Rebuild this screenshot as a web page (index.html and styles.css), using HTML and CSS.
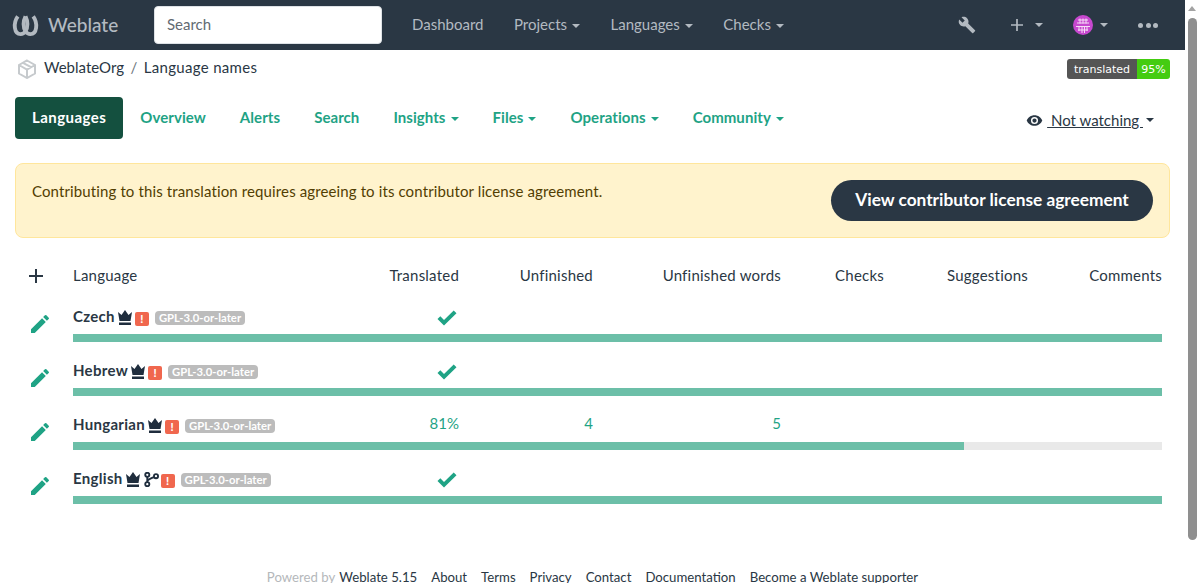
FILE: index.html
```html
<!DOCTYPE html>
<html lang="en">
  <head>
    <meta charset="UTF-8" />
    <title>Language names</title>
    <link rel="stylesheet" href="styles.css">
  </head>
  <body>
    <nav class="navbar">
      <a class="brand">
        <svg class="brand-logo" viewBox="0 0 28 24" width="27" height="24"><path d="M6 3C1 10 2 21.500 9 21.500c4 0 7-4.500 7-10.500 0-3-1-6-2-8"/><path d="M22 3c5 7 4 18.500-3 18.500-4 0-7-4.500-7-10.500 0-3 1-6 2-8"/></svg>
        <span>Weblate</span>
      </a>
      <input class="nav-search" type="text" placeholder="Search">
      <ul class="nav-links">
        <li>Dashboard</li>
        <li class="has-caret">Projects</li>
        <li class="has-caret">Languages</li>
        <li class="has-caret">Checks</li>
      </ul>
      <div class="nav-tools">
        <svg class="tool-wrench" viewBox="0 0 24 24" width="18" height="18"><path d="M22.700 19l-9.100-9.100c.9-2.300.4-5-1.500-6.900-2-2-5-2.400-7.400-1.300L9 6 6 9 1.600 4.700C.4 7.100.9 10.100 2.900 12.100c1.900 1.900 4.600 2.400 6.900 1.500l9.100 9.100c.4.400 1 .4 1.400 0l2.300-2.300c.5-.4.500-1.100.100-1.400z"/></svg>
        <svg class="tool-plus" viewBox="0 0 14 14" width="12" height="12"><path d="M6 0h2v6h6v2H8v6H6V8H0V6h6z"/></svg>
        <span class="caret tool-caret-a"></span>
        <svg class="avatar" viewBox="0 0 20 20" width="20" height="20">
          <circle cx="10" cy="10" r="10" fill="#c748cf"/>
          <path d="M5 5h10M4 8h12M3 11.500h14M5 15h10M7 3.500v5M10 3.500v5M13 3.500v5M6 11v5M9 11v7M11.500 11v7M14 11v5" stroke="#f6dcf7" stroke-width="1" fill="none"/>
        </svg>
        <span class="caret tool-caret-b"></span>
        <div class="dots"><i></i><i></i><i></i></div>
      </div>
    </nav>

    <div class="crumb-row">
      <div class="crumbs">
        <svg class="crumb-icon" viewBox="0 0 20 20" width="20" height="20"><path d="M10 1.500L18 6v8.500L10 19l-8-4.500V6zM2 6l8 4.500L18 6M10 10.500V19M6 3.800l8 4.400"/></svg>
        <a>WeblateOrg</a>
        <span class="crumb-sep">/</span>
        <a class="crumb-project">Language names</a>
      </div>
      <div class="badge"><span class="badge-label">translated</span><span class="badge-value">95%</span></div>
    </div>

    <div class="tabs-row">
      <ul class="tabs">
        <li class="tab is-active">Languages</li>
        <li class="tab">Overview</li>
        <li class="tab">Alerts</li>
        <li class="tab">Search</li>
        <li class="tab has-caret">Insights</li>
        <li class="tab has-caret">Files</li>
        <li class="tab has-caret">Operations</li>
        <li class="tab has-caret">Community</li>
      </ul>
      <div class="watch">
        <svg viewBox="0 0 24 24" width="17" height="17"><path d="M12 4.500C7 4.500 2.700 7.600 1 12c1.700 4.400 6 7.500 11 7.500s9.300-3.100 11-7.500c-1.700-4.400-6-7.500-11-7.500zM12 17a5 5 0 1 1 0-10 5 5 0 0 1 0 10zm0-8a3 3 0 1 0 0 6 3 3 0 0 0 0-6z"/></svg>
        <a>&nbsp;Not watching&nbsp;</a>
        <span class="caret"></span>
      </div>
    </div>

    <div class="alert">
      <p>Contributing to this translation requires agreeing to its contributor license agreement.</p>
      <a class="alert-button">View contributor license agreement</a>
    </div>

    <table class="lang-table">
      <colgroup>
        <col class="col-icon"><col class="col-lang"><col class="col-trans"><col class="col-unf"><col class="col-words"><col class="col-checks"><col class="col-sugg"><col class="col-comm">
      </colgroup>
      <thead>
        <tr>
          <th class="cell-icon"><svg class="add-icon" viewBox="0 0 14 14" width="14" height="14"><path d="M6 0h2v6h6v2H8v6H6V8H0V6h6z"/></svg></th>
          <th class="cell-name">Language</th>
          <th>Translated</th>
          <th>Unfinished</th>
          <th>Unfinished words</th>
          <th>Checks</th>
          <th>Suggestions</th>
          <th>Comments</th>
        </tr>
      </thead>
      <tbody>
        <tr class="row-main">
          <td class="cell-icon" rowspan="2"><svg class="pencil" viewBox="0 0 24 24" width="24" height="24"><path d="M3 17.250V21h3.750L17.810 9.940l-3.750-3.750zM20.710 7.040a1 1 0 0 0 0-1.410l-2.340-2.340a1 1 0 0 0-1.410 0l-1.830 1.830 3.750 3.750z"/></svg></td>
          <td class="cell-name"><span class="lang-name">Czech</span><svg class="crown" viewBox="0 0 16 15" width="16" height="15"><path d="M1 2l3.500 3L8 0l3.500 5L15 2l-1.500 9h-11zM2 12.500h12V15H2z"/></svg><span class="warn">!</span><span class="license">GPL-3.0-or-later</span></td>
          <td><svg class="check" viewBox="0 0 20 16" width="20" height="16"><path d="M7 15.500L.5 9l2.800-2.800L7 9.900 16.700.5l2.800 2.800z"/></svg></td>
          <td></td><td></td><td></td><td></td><td></td>
        </tr>
        <tr class="row-bar"><td colspan="7"><div class="bar"><div class="bar-fill" style="width: 100%"></div></div></td></tr>
        <tr class="row-main">
          <td class="cell-icon" rowspan="2"><svg class="pencil" viewBox="0 0 24 24" width="24" height="24"><path d="M3 17.250V21h3.750L17.810 9.940l-3.750-3.750zM20.710 7.040a1 1 0 0 0 0-1.410l-2.340-2.340a1 1 0 0 0-1.410 0l-1.830 1.830 3.750 3.750z"/></svg></td>
          <td class="cell-name"><span class="lang-name">Hebrew</span><svg class="crown" viewBox="0 0 16 15" width="16" height="15"><path d="M1 2l3.500 3L8 0l3.500 5L15 2l-1.500 9h-11zM2 12.500h12V15H2z"/></svg><span class="warn">!</span><span class="license">GPL-3.0-or-later</span></td>
          <td><svg class="check" viewBox="0 0 20 16" width="20" height="16"><path d="M7 15.500L.5 9l2.800-2.800L7 9.900 16.700.5l2.800 2.800z"/></svg></td>
          <td></td><td></td><td></td><td></td><td></td>
        </tr>
        <tr class="row-bar"><td colspan="7"><div class="bar"><div class="bar-fill" style="width: 100%"></div></div></td></tr>
        <tr class="row-main">
          <td class="cell-icon" rowspan="2"><svg class="pencil" viewBox="0 0 24 24" width="24" height="24"><path d="M3 17.250V21h3.750L17.810 9.940l-3.750-3.750zM20.710 7.040a1 1 0 0 0 0-1.410l-2.340-2.340a1 1 0 0 0-1.410 0l-1.830 1.830 3.750 3.750z"/></svg></td>
          <td class="cell-name"><span class="lang-name">Hungarian</span><svg class="crown" viewBox="0 0 16 15" width="16" height="15"><path d="M1 2l3.500 3L8 0l3.500 5L15 2l-1.500 9h-11zM2 12.500h12V15H2z"/></svg><span class="warn">!</span><span class="license">GPL-3.0-or-later</span></td>
          <td class="num">81%</td>
          <td class="num">4</td>
          <td class="num">5</td>
          <td></td><td></td><td></td>
        </tr>
        <tr class="row-bar"><td colspan="7"><div class="bar"><div class="bar-fill" style="width: 81.800%"></div></div></td></tr>
        <tr class="row-main">
          <td class="cell-icon" rowspan="2"><svg class="pencil" viewBox="0 0 24 24" width="24" height="24"><path d="M3 17.250V21h3.750L17.810 9.940l-3.750-3.750zM20.710 7.040a1 1 0 0 0 0-1.410l-2.340-2.340a1 1 0 0 0-1.410 0l-1.830 1.830 3.750 3.750z"/></svg></td>
          <td class="cell-name"><span class="lang-name">English</span><svg class="crown" viewBox="0 0 16 15" width="16" height="15"><path d="M1 2l3.500 3L8 0l3.500 5L15 2l-1.500 9h-11zM2 12.500h12V15H2z"/></svg><svg class="fork" viewBox="0 0 16 16" width="15" height="15"><circle cx="3.500" cy="3" r="2.200"/><circle cx="3.500" cy="13" r="2.200"/><circle cx="12.800" cy="4.500" r="2.200"/><path d="M3.500 5.200v5.600M3.500 10c0-2 3-2.500 7-4.500"/></svg><span class="warn">!</span><span class="license">GPL-3.0-or-later</span></td>
          <td><svg class="check" viewBox="0 0 20 16" width="20" height="16"><path d="M7 15.500L.5 9l2.800-2.800L7 9.900 16.700.5l2.800 2.800z"/></svg></td>
          <td></td><td></td><td></td><td></td><td></td>
        </tr>
        <tr class="row-bar"><td colspan="7"><div class="bar"><div class="bar-fill" style="width: 100%"></div></div></td></tr>
      </tbody>
    </table>

    <footer class="footer">
      <span class="powered">Powered by</span>
      <a>Weblate 5.15</a>
      <a>About</a>
      <a>Terms</a>
      <a>Privacy</a>
      <a>Contact</a>
      <a>Documentation</a>
      <a>Become a Weblate supporter</a>
    </footer>

    <div class="scrollbar"><span class="scroll-up"></span><span class="scroll-thumb"></span></div>
  </body>
</html>
```

FILE: styles.css
```css
* {
  box-sizing: border-box;
  margin: 0;
  padding: 0;
}
html, body {
  height: 583px;
  overflow: hidden;
}
body {
  width: 1185px;
  background: #fff;
  color: #2a3744;
  font: 15px Lato, sans-serif;
}
ul {
  list-style: none;
}
.caret {
  display: inline-block;
  width: 0;
  height: 0;
  border-top: 4px solid currentColor;
  border-left: 4px solid transparent;
  border-right: 4px solid transparent;
}
.has-caret::after {
  content: "";
  display: inline-block;
  margin-left: 5px;
  vertical-align: 2px;
  border-top: 4px solid currentColor;
  border-left: 4px solid transparent;
  border-right: 4px solid transparent;
}

/* top bar */
.navbar {
  display: flex;
  align-items: center;
  height: 50px;
  background: #2a3744;
  color: #b3bac1;
}
.brand {
  display: flex;
  align-items: center;
  width: 154px;
  padding-left: 12px;
  font-size: 19px;
  font-weight: 500;
}
.brand span {
  padding-bottom: 2px;
}
.brand-logo {
  fill: none;
  stroke: #b3bac1;
  stroke-width: 4;
  margin-right: 9px;
}
.nav-search {
  width: 228px;
  height: 38px;
  padding: 0 12px 2px;
  background: #fff;
  border: 1px solid #dee2e6;
  border-radius: 4px;
  font: 15px Lato, sans-serif;
}
.nav-search::placeholder {
  color: #626a72;
}
.nav-links {
  display: flex;
  gap: 30.500px;
  margin-left: 30px;
  padding-bottom: 2px;
}
.nav-tools {
  display: flex;
  align-items: center;
  margin-left: auto;
  padding-right: 27px;
}
.tool-wrench {
  fill: #b3bac1;
  margin-right: 35px;
}
.tool-plus {
  fill: #b3bac1;
  margin-right: 12px;
}
.tool-caret-a {
  margin-right: 30px;
}
.avatar {
  margin-right: 7px;
}
.tool-caret-b {
  margin-right: 30px;
}
.dots {
  display: flex;
  gap: 2.500px;
}
.dots i {
  width: 5px;
  height: 5px;
  border-radius: 50%;
  background: #b3bac1;
}

/* breadcrumb */
.crumb-row {
  display: flex;
  align-items: flex-start;
  justify-content: space-between;
  height: 47px;
  padding: 9px 15px 0 17px;
}
.crumbs {
  display: flex;
  align-items: center;
  height: 20px;
}
.crumbs a,
.crumb-sep {
  margin-bottom: 5px;
}
.crumb-icon {
  fill: none;
  stroke: #c6cacd;
  stroke-width: 2;
  margin-right: 7px;
}
.crumb-sep {
  margin-left: 6.500px;
  margin-right: 6.500px;
  color: #6c757d;
}
.crumb-project {
  letter-spacing: .3px;
}
.badge {
  display: flex;
  height: 20px;
  font: 11px/21px "DejaVu Sans", sans-serif;
  color: #fff;
  border-radius: 3px;
  overflow: hidden;
}
.badge-label {
  width: 70px;
  text-align: center;
  background: #555;
}
.badge-value {
  width: 33px;
  text-align: center;
  background: #4c1;
}

/* tabs */
.tabs-row {
  display: flex;
  justify-content: space-between;
  align-items: center;
  height: 42px;
  padding: 0 31px 0 15px;
}
.tabs {
  display: flex;
  align-items: center;
  gap: 34px;
}
.tab {
  padding-bottom: 2px;
  color: #1fa385;
  font-weight: 700;
  letter-spacing: .06px;
}
.tab.is-active {
  display: flex;
  align-items: center;
  height: 42px;
  padding: 0 17px 2px;
  margin-right: -17px;
  background: #14503f;
  color: #fff;
  border-radius: 4px;
  letter-spacing: .45px;
}
.watch {
  display: flex;
  align-items: center;
  padding-top: 4px;
}
.watch svg {
  fill: #2a3744;
  margin-right: 4px;
}
.watch a {
  text-decoration: underline;
  margin-right: 3px;
}

/* license alert */
.alert {
  display: flex;
  justify-content: space-between;
  align-items: center;
  height: 75px;
  margin: 24px 15px 0;
  padding: 0 16px;
  background: #fff3cd;
  border: 1px solid #ffe69c;
  border-radius: 8px;
  color: #523e02;
}
.alert p {
  margin-top: -20px;
  letter-spacing: .12px;
}
.alert-button {
  display: block;
  width: 322px;
  height: 41px;
  line-height: 40px;
  text-align: center;
  background: #2a3744;
  color: #fff;
  font-size: 17.300px;
  font-weight: 700;
  border-radius: 21px;
}

/* language table */
.lang-table {
  width: 1155px;
  margin: 20px 15px 0;
  border-collapse: collapse;
  table-layout: fixed;
}
.col-icon { width: 50px; }
.col-lang { width: 315px; }
.col-trans { width: 87px; }
.col-unf { width: 134px; }
.col-words { width: 188px; }
.col-checks { width: 103px; }
.col-sugg { width: 144px; }
.col-comm { width: 134px; }
.lang-table th {
  height: 36px;
  padding: 0 8px 2px;
  font-weight: 400;
  letter-spacing: .22px;
  text-align: right;
}
.lang-table th.cell-name {
  text-align: left;
}
.lang-table th.cell-icon {
  text-align: center;
  padding: 0 8px 0 0;
}
.add-icon {
  fill: #2a3744;
  vertical-align: -1px;
}
.pencil {
  fill: #1fa385;
}
.row-main td {
  height: 40px;
  padding: 4px 8px 0;
  vertical-align: middle;
  text-align: right;
}
.row-main td.cell-name {
  text-align: left;
}
.row-main td.cell-icon {
  padding: 8px 0 0;
  text-align: center;
}
.row-main td.num {
  padding-top: 2px;
  color: #1fa385;
}
.row-bar td {
  height: 14px;
  padding: 0 8px 6px;
  vertical-align: top;
}
.lang-name {
  font-weight: 700;
  letter-spacing: .3px;
}
.crown {
  fill: #1f2d3d;
  margin-left: 2px;
  vertical-align: -3px;
}
.fork {
  fill: none;
  stroke: #1f2d3d;
  stroke-width: 2;
  margin-left: 3px;
  vertical-align: -3px;
}
.warn {
  display: inline-block;
  width: 14px;
  height: 14px;
  margin-left: 2px;
  line-height: 14px;
  text-align: center;
  background: #f0674e;
  color: #fff;
  font-size: 11px;
  font-weight: 900;
  border-radius: 2px;
  vertical-align: -1px;
}
.license {
  display: inline-block;
  margin-left: 6px;
  padding: 0 4px;
  height: 14px;
  line-height: 14px;
  background: #bcbcbc;
  color: #fff;
  font-size: 11.300px;
  font-weight: 700;
  border-radius: 4px;
  vertical-align: 0;
}
.check {
  fill: #1fa385;
  margin-right: 2px;
  vertical-align: -4px;
}
.bar {
  height: 8px;
  background: #e9e9e9;
}
.bar-fill {
  height: 100%;
  background: #6cbfa8;
}

/* footer */
.footer {
  display: flex;
  justify-content: center;
  gap: 14px;
  margin-top: 59px;
  font-size: 13.200px;
}
.powered {
  color: #b5b8bb;
  margin-right: -10px;
}

/* the browser scrollbar, part of the picture */
.scrollbar {
  position: fixed;
  top: 0;
  right: 0;
  width: 15px;
  height: 583px;
  background: #fff;
}
.scroll-up {
  position: absolute;
  top: 6px;
  left: 3px;
  border-bottom: 5px solid #a3a3a3;
  border-left: 4.500px solid transparent;
  border-right: 4.500px solid transparent;
}
.scroll-thumb {
  position: absolute;
  top: 18px;
  left: 3px;
  width: 9px;
  height: 522px;
  background: #8f8f8f;
  border-radius: 5px;
}
```
